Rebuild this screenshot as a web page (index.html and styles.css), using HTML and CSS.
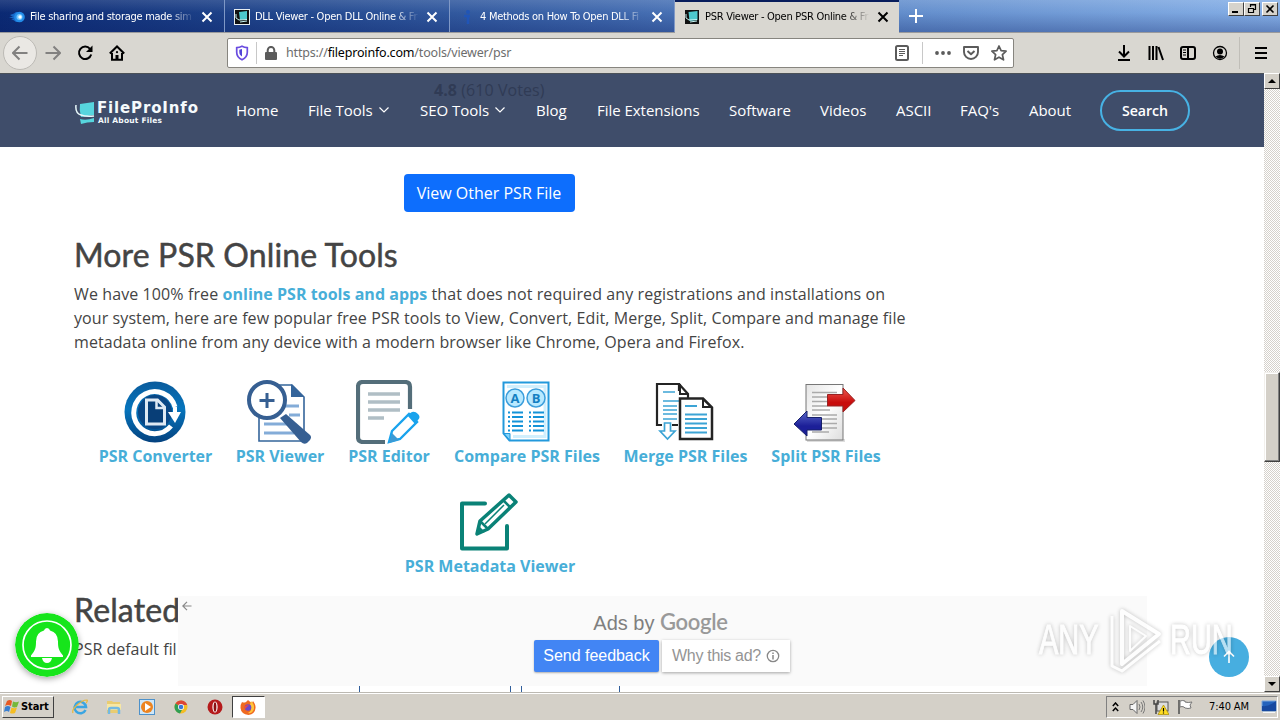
FILE: index.html
```html
<!DOCTYPE html>
<html lang="en">
<head>
<meta charset="utf-8">
<title>PSR Viewer - Open PSR Online</title>
<link rel="stylesheet" href="styles.css">
</head>
<body>
<div class="tabbar">
  <div class="tab">
    <svg class="favicon" viewBox="0 0 16 16"><path d="M1 6Q5 5 7 3h5v10H7Q5 11 2 10h3L0 8h4z" fill="#1769c9"/><circle cx="10.500" cy="8" r="5.300" fill="#238ce8"/><circle cx="10.500" cy="8" r="3" fill="#75c8ff"/><circle cx="11" cy="8" r="1.700" fill="#fff"/></svg>
    <span class="tab-title">File sharing and storage made sim</span>
    <svg class="tab-close" viewBox="0 0 12 12"><path d="M1.500 1.500l9 9M10.500 1.500l-9 9"/></svg>
  </div>
  <div class="tab">
    <svg class="favicon" viewBox="0 0 16 16"><rect x=".5" y=".5" width="15" height="15" fill="#111" stroke="#e8eef0"/><path d="M5 3l8-1v8l-7 1z" fill="#4dc9cd"/><path d="M2 5v4l3 2 8-.5M6 13l7-1" stroke="#c6f4f3" fill="none"/></svg>
    <span class="tab-title">DLL Viewer - Open DLL Online &amp; Fr</span>
    <svg class="tab-close" viewBox="0 0 12 12"><path d="M1.500 1.500l9 9M10.500 1.500l-9 9"/></svg>
  </div>
  <div class="tab">
    <svg class="favicon" viewBox="0 0 16 16"><circle cx="9" cy="3" r="2" fill="#2055b8"/><path d="M5 7h6M9 6v9" stroke="#2055b8" stroke-width="2.500"/></svg>
    <span class="tab-title">4 Methods on How To Open DLL Fi</span>
    <svg class="tab-close" viewBox="0 0 12 12"><path d="M1.500 1.500l9 9M10.500 1.500l-9 9"/></svg>
  </div>
  <div class="tab tab-active">
    <svg class="favicon" viewBox="0 0 16 16"><rect x="1" y="1" width="14" height="14" fill="#111"/><path d="M4.500 3l9-1v9l-8 1z" fill="#4dc9cd"/><path d="M2 5v4l3 2 8-.5M6 13l7-1" stroke="#c6f4f3" fill="none"/></svg>
    <span class="tab-title">PSR Viewer - Open PSR Online &amp; Fr</span>
    <svg class="tab-close" viewBox="0 0 12 12"><path d="M1.500 1.500l9 9M10.500 1.500l-9 9"/></svg>
  </div>
  <svg class="new-tab" viewBox="0 0 14 14"><path d="M7 0v14M0 7h14" stroke="#fff" stroke-width="2"/></svg>
  <div class="win-buttons">
    <span class="win-btn"><svg viewBox="0 0 12 10"><path d="M2 8h6" stroke="#000" stroke-width="2"/></svg></span>
    <span class="win-btn"><svg viewBox="0 0 12 10"><path d="M4.500 3V.5h5v5H8M4 1h6M2.500 4.500h5v4h-5zM2 4.500h6" stroke="#000" fill="none" stroke-width="1.200"/></svg></span>
    <span class="win-btn win-close"><svg viewBox="0 0 12 10"><path d="M2.500 1.500l7 7M9.500 1.500l-7 7" stroke="#000" stroke-width="1.600"/></svg></span>
  </div>
</div>

<div class="toolbar">
  <span class="back"><svg viewBox="0 0 16 16" class="ic grey"><path d="M15.500 8H1M7.500 1.500L1 8l6.500 6.500"/></svg></span>
  <svg viewBox="0 0 16 16" class="ic grey forward"><path d="M.5 8H15M8.500 1.500L15 8l-6.500 6.500"/></svg>
  <svg viewBox="0 0 16 16" class="ic reload"><path d="M13 3.800A6.200 6.200 0 1 0 14.200 9.500"/><path d="M15.500.5V7H9z" fill="#000" stroke="none"/></svg>
  <svg viewBox="0 0 16 16" class="ic home"><path d="M.8 8.500L8 1.500l7.200 7M3 8v6.700h10V8"/><path d="M6.500 15v-5h3v5z" fill="#000" stroke="none"/><circle cx="8" cy="7.200" r="1.100" fill="#000" stroke="none"/></svg>
  <div class="urlbar">
    <svg class="shield" viewBox="0 0 14 16"><path d="M7 1.300c2 1 3.800 1.300 5.300 1.400v4.500c0 3.500-2 6-5.300 7.500-3.300-1.500-5.300-4-5.300-7.500V2.700C3.200 2.600 5 2.300 7 1.300z" fill="none" stroke="#6a4ce0" stroke-width="1.700"/><path d="M7 4v7.500C5 10.200 4.300 8.800 4.300 7V4.800z" fill="#5142d6"/></svg>
    <span class="url-sep"></span>
    <svg class="lock" viewBox="0 0 12 14"><rect y="6" width="12" height="8" rx="1" fill="#5b5b5b"/><path d="M2.700 7V4.200a3.300 3.300 0 0 1 6.600 0V7" stroke="#5b5b5b" stroke-width="2" fill="none"/></svg>
    <span class="url">https://<b>fileproinfo.com</b>/tools/viewer/psr</span>
    <svg class="reader" viewBox="0 0 14 16"><rect x="1" y="1" width="12" height="14" rx="1.500" fill="none" stroke="#5b5b5b" stroke-width="2"/><path d="M4 4.500h6M4 6.500h6M4 8.500h6M4 10.500h4" stroke="#5b5b5b"/></svg>
    <span class="url-sep url-sep-right"></span>
    <svg class="dots" viewBox="0 0 16 4"><g fill="#5b5b5b"><circle cx="2" cy="2" r="1.900"/><circle cx="8" cy="2" r="1.900"/><circle cx="14" cy="2" r="1.900"/></g></svg>
    <svg class="pocket" viewBox="0 0 16 14"><path d="M1 1h14v5a7 7 0 0 1-14 0zM4.500 5L8 8.300 11.500 5" fill="none" stroke="#5b5b5b" stroke-width="1.900" stroke-linejoin="round"/></svg>
    <svg class="star" viewBox="0 0 16 16"><path d="M8 1l2.100 4.700 5 .5-3.700 3.500 1.100 5.100L8 12.200l-4.500 2.600 1.100-5.100L.9 6.200l5-.5z" fill="none" stroke="#5b5b5b" stroke-width="1.700" stroke-linejoin="round"/></svg>
  </div>
  <div class="tool-icons">
    <svg viewBox="0 0 16 16" class="ic"><path d="M8 0v11M3 6.500l5 5 5-5M2 15h12"/></svg>
    <svg viewBox="0 0 16 16" class="ic"><path d="M1.500 1v14M5 1v14M8.500 1v14M10.500 2l4.500 13"/></svg>
    <svg viewBox="0 0 16 16" class="ic"><rect x="1" y="2" width="14" height="12" rx="2"/><path d="M8 2v12"/><path d="M3 5h3M3 7.500h3M3 10h3" stroke-width="1"/></svg>
    <svg viewBox="0 0 16 16" class="ic"><circle cx="8" cy="8" r="6.500" stroke-width="1.300"/><circle cx="8" cy="6.500" r="3" fill="#000" stroke="none"/><path d="M3.500 11.500q4.500-3 9 0Q8 16 3.500 11.500z" fill="#000" stroke="none"/></svg>
    <span class="tool-sep"></span>
    <svg viewBox="0 0 16 16" class="ic"><path d="M2 3h12M2 8h12M2 13h12"/></svg>
  </div>
</div>

<div class="viewport">
  <div class="page">
    <header class="site-nav">
      <div class="votes"><b>4.8</b> (610 Votes)</div>
      <div class="logo">
        <svg class="logo-mark" viewBox="0 0 20 24"><path d="M5 3l14-2v13L6 16Q4 9 5 3z" fill="#57d6de"/><path d="M1 4q-1 8 5 10 5 2 13 1" stroke="#e8f8fa" stroke-width="1.500" fill="none"/><path d="M5 18q6 2 14-1v4q-7 0-13 2z" fill="#57d6de"/></svg>
        <div class="logo-text"><span class="logo-name">FileProInfo</span><span class="logo-sub">All About Files</span></div>
      </div>
      <nav class="menu">
        <a>Home</a>
        <a>File Tools <svg class="chev" viewBox="0 0 10 6"><path d="M.5.5L5 5 9.500.5"/></svg></a>
        <a>SEO Tools <svg class="chev" viewBox="0 0 10 6"><path d="M.5.5L5 5 9.500.5"/></svg></a>
        <a>Blog</a><a>File Extensions</a><a>Software</a><a>Videos</a><a>ASCII</a><a>FAQ's</a><a>About</a>
        <a class="search">Search</a>
      </nav>
    </header>
    <main class="content">
      <a class="view-btn">View Other PSR File</a>
      <h2>More PSR Online Tools</h2>
      <p class="intro">
        <span class="line line-1">We have 100% free <b>online PSR tools and apps</b> that does not required any registrations and installations on</span>
        <span class="line line-2">your system, here are few popular free PSR tools to View, Convert, Edit, Merge, Split, Compare and manage file</span>
        <span class="line line-3">metadata online from any device with a modern browser like Chrome, Opera and Firefox.</span>
      </p>
      <div class="tools">
        <a class="tool"><svg viewBox="0 0 64 64">
          <defs><linearGradient id="cg" x1="0" y1="0" x2="0" y2="1"><stop offset="0" stop-color="#0a5b9c"/><stop offset=".45" stop-color="#0675bd"/><stop offset="1" stop-color="#04427f"/></linearGradient></defs>
          <circle cx="32" cy="32" r="30.500" fill="url(#cg)"/><circle cx="32" cy="32" r="17" fill="#0a4785"/><path d="M48 46A21 21 0 1 1 52 27" fill="none" stroke="#fff" stroke-width="5"/><path d="M45 32h13l-6 11z" fill="#fff"/><path d="M50 27h4v7h-4z" fill="#fff"/><path d="M23.500 20h11l7 7v17h-18z" fill="#083e77" stroke="#dfe9f3" stroke-width="3"/><path d="M33.500 20v8h8" fill="none" stroke="#dfe9f3" stroke-width="2.500"/></svg>PSR Converter</a>
        <a class="tool"><svg viewBox="0 0 64 64">
          <path d="M12 5h33l12 12v44H12z" fill="#fff" stroke="#35659b" stroke-width="1.600"/><path d="M44 4v13h13z" fill="#35659b"/><path d="M37 26h15M42 35h11M17 44h26M17 53h30" stroke="#83acd8" stroke-width="3"/>
          <path d="M33 38l6-4 24 21q2 2 0 5l-3 3q-3 2-6-1z" fill="#365f92"/><circle cx="20" cy="20" r="18" fill="#fff" stroke="#365f92" stroke-width="4"/><path d="M12.500 20.500h15M20 13v15" stroke="#365f92" stroke-width="3"/></svg>PSR Viewer</a>
        <a class="tool"><svg viewBox="0 0 64 64">
          <path d="M54 29V7q0-5-5-5H7Q2 2 2 7v50q0 5 5 5h22" fill="none" stroke="#546e7a" stroke-width="4.200"/><path d="M12 14h32M12 22h32M12 30h32M12 38h16" stroke="#b0bec5" stroke-width="3.600"/>
          <path d="M33 62l3-11 17-17 8 8-17 17z" fill="#fff" stroke="#19a3ed" stroke-width="2.400"/><path d="M33 63l3-10 7 7z" fill="#3c9bd5"/><path d="M51 35l5-3q3-1 6 2t0 6l-3 4z" fill="#19a3ed"/></svg>PSR Editor</a>
        <a class="tool"><svg viewBox="0 0 64 64">
          <path d="M9.500 2.500h45v58h-39l-6-7z" fill="#fff" stroke="#2399dc" stroke-width="2"/><path d="M13 6.500h38v50H19" fill="none" stroke="#d1effd" stroke-width="3"/><path d="M10 53.500h6v7z" fill="#82d4fb" stroke="#2399dc"/><circle cx="21" cy="18" r="9" fill="#b9e9ff" stroke="#3d9fdc" stroke-width="1.500"/><circle cx="42" cy="18" r="9" fill="#b9e9ff" stroke="#3d9fdc" stroke-width="1.500"/>
          <text x="21" y="22.500" class="badge-letter">A</text><text x="42" y="22.500" class="badge-letter">B</text><path d="M18 32.500h11M18 37h11M18 41.500h11M18 46h11M18 50.500h11M39 32.500h11M39 37h11M39 41.500h11M39 46h11M39 50.500h11" stroke="#1593d8" stroke-width="2"/><path d="M14 32.500h2M14 37h2M14 41.500h2M14 46h2M14 50.500h2M35 32.500h2M35 37h2M35 41.500h2M35 46h2M35 50.500h2" stroke="#1593d8" stroke-width="2"/></svg>Compare PSR Files</a>
        <a class="tool"><svg viewBox="0 0 64 64">
          <path d="M26 11V4H4v41h5M19 45h6M26 4l9 10v4" fill="none" stroke="#242424" stroke-width="2.200"/><path d="M27 4v10h8" fill="none" stroke="#242424" stroke-width="2"/><path d="M10 12h12M10 21h16M10 26h14M10 30h14M10 34h14M10 39h14" stroke="#3ca4d5" stroke-width="1.700"/><path d="M27 18.500h23l9 9V59H27z" fill="#fff" stroke="#242424" stroke-width="2.500"/><path d="M50 18v9h9" fill="none" stroke="#242424" stroke-width="2"/><path d="M32 26h12M32 34.500h22M32 39h22M32 43.500h22M32 48h22M32 52.500h22" stroke="#3ca4d5" stroke-width="1.800"/><path d="M11.500 43h6v8H22l-7.500 8L7 51h4.500z" fill="#fff" stroke="#3ca4d5" stroke-width="1.700"/></svg>Merge PSR Files</a>
        <a class="tool"><svg viewBox="0 0 64 64">
          <defs><linearGradient id="pg" x1="0" y1="0" x2="1" y2="1"><stop stop-color="#e5e5e5"/><stop offset=".5" stop-color="#fff"/><stop offset="1" stop-color="#ddd"/></linearGradient><linearGradient id="rg" x1="0" y1="0" x2="0" y2="1"><stop stop-color="#ee5a50"/><stop offset=".6" stop-color="#c80c0c"/></linearGradient><linearGradient id="bg" x1="0" y1="0" x2="0" y2="1"><stop stop-color="#5a68c8"/><stop offset=".6" stop-color="#1c1f98"/></linearGradient></defs>
          <rect x="14" y="59" width="38" height="3" fill="#ddd"/><rect x="13" y="4.500" width="37" height="55.500" fill="url(#pg)" stroke="#777"/><path d="M19 12.500h25M19 17h25M19 21.500h25M19 26h16M19 30h18M19 35h25M19 39h25M19 43.500h25M19 48h25M19 52h17" stroke="#aaa" stroke-width="1.500"/><path d="M34.500 14.500H50V8l12 12.500L50 32v-6H34.500z" fill="url(#rg)" stroke="#922"/><path d="M28.500 37.500H14V31L1 44l13 12v-6h14.500z" fill="url(#bg)" stroke="#17206a"/></svg>Split PSR Files</a>
      </div>
      <a class="tool tool-meta"><svg viewBox="0 0 64 64"><path d="M27 13.500H4v45h45V36" fill="none" stroke="#0a8277" stroke-width="4" stroke-linecap="round" stroke-linejoin="round"/><path d="M19 44l3-13L51 5l7 7-28 27z" fill="#fff" stroke="#0a8277" stroke-width="3.500" stroke-linejoin="round"/><path d="M45 10l7 7M22 31l8 8" stroke="#0a8277" stroke-width="2.500"/><path d="M27 34L46 15" stroke="#0a8277" stroke-width="1.500"/><path d="M19 44l2-8 6 6z" fill="#0a8277"/></svg>PSR Metadata Viewer</a>
      <h2 class="related">Related</h2>
      <p class="default-file">PSR default fil</p>
    </main>
    <div class="table-peek"><i></i><i></i><i></i><i></i></div>
    <div class="ad">
      <svg class="ad-back" viewBox="0 0 10 10"><path d="M9.500 5H1M5 .8L.8 5 5 9.200" fill="none" stroke="#888" stroke-width="1.200"/></svg>
      <div class="ad-title">Ads by <b>Google</b></div>
      <div class="ad-actions"><span class="feedback">Send feedback</span><span class="why">Why this ad? <svg viewBox="0 0 14 14"><circle cx="7" cy="7" r="5.700" fill="none" stroke="#888" stroke-width="1.300"/><path d="M7 6v4.500M7 3.500v1.500" stroke="#888" stroke-width="1.500"/></svg></span></div>
    </div>
    <svg class="bell" viewBox="0 0 64 64"><circle cx="32" cy="32" r="32" fill="#16e51b"/><circle cx="32" cy="32" r="24" fill="none" stroke="#fff" stroke-width="1.700"/><path d="M32 15q2.500 0 3 2.500 8 2 8 11c0 7 1 9 5 14v1.500H16v-1.500c4-5 5-7 5-14q0-9 8-11 .5-2.500 3-2.500z" fill="#fff"/><path d="M27 45h10q-1 5-5 5t-5-5z" fill="#fff"/></svg>
    <div class="to-top"><svg viewBox="0 0 14 14"><path d="M7 13V1.500M2 6.500l5-5 5 5" fill="none" stroke="#fff" stroke-width="1.600"/></svg></div>
    <div class="watermark"><span>ANY</span><svg viewBox="0 0 54 66"><g fill="none" stroke="#fff" stroke-linejoin="round"><path d="M13 4L50 27 13 57z" stroke-width="4"/><path d="M3 9v50l10 5 38-30" stroke-width="3"/><path d="M21 19v25l16-15z" stroke-width="2"/></g></svg><span>RUN</span></div>
  </div>
  <div class="scrollbar">
    <span class="sb-btn"><svg viewBox="0 0 8 4"><path d="M0 4l4-4 4 4z"/></svg></span>
    <span class="sb-thumb"></span>
    <span class="sb-btn"><svg viewBox="0 0 8 4"><path d="M0 0l4 4 4-4z"/></svg></span>
  </div>
</div>

<div class="taskbar">
  <div class="start"><svg viewBox="0 0 16 16"><path d="M3 2q3-2 5 0L7 7Q4 5 1 7z" fill="#e85a24"/><path d="M9 2.500q3 1.500 6 0L13 8Q10 9 8 7.500z" fill="#75b83a"/><path d="M1 8q3-2 5.500 0L5 13Q3 11 0 13z" fill="#3a7fd0"/><path d="M7.500 8.500q3 1.500 5.500 0L11 14q-3 1-5 0z" fill="#f5bd22"/></svg>Start</div>
  <div class="launch">
    <span><svg viewBox="0 0 16 16"><path d="M13.500 11A5.700 5.700 0 1 1 14 8H4" fill="none" stroke="#3aa5e2" stroke-width="2.500"/><path d="M1 14C-1 10 9 1 15 1q1 1-1 3" fill="none" stroke="#e8b83c" stroke-width="1.200"/></svg></span>
    <span><svg viewBox="0 0 16 16"><path d="M1 2h5l1 1h7v11H1z" fill="#e9cc70"/><path d="M1 5h14v6H1z" fill="#f7e7a3"/><path d="M3 15v-4q0-2 2-2h6q2 0 2 2v4" fill="none" stroke="#73b9e2" stroke-width="2.500"/></svg></span>
    <span><svg viewBox="0 0 16 16"><rect x=".5" y=".5" width="15" height="15" fill="#cfe7f8" stroke="#4d91ca"/><circle cx="8" cy="8" r="6" fill="#ed8420"/><path d="M6 4l6 4-6 4z" fill="#fff"/></svg></span>
    <span><svg viewBox="0 0 16 16"><circle cx="8" cy="8" r="6.500" fill="#f4bd24"/><path d="M8 8L2.500 4.500A6.500 6.500 0 0 1 14.200 6H8z" fill="#dc4637"/><path d="M8 8L2.500 4.500A6.500 6.500 0 0 0 7 14.400L10 9z" fill="#2f9e54"/><circle cx="8" cy="8" r="3" fill="#fff"/><circle cx="8" cy="8" r="2.300" fill="#3b78d8"/></svg></span>
    <span><svg viewBox="0 0 16 16"><ellipse cx="8" cy="8" rx="7.500" ry="7.500" fill="#b51a1b"/><ellipse cx="8" cy="8" rx="2.600" ry="5.500" fill="#fff"/><ellipse cx="8" cy="8" rx="1.400" ry="4.800" fill="#8c1011"/></svg></span>
    <span class="pressed"><svg viewBox="0 0 16 16"><path d="M2 3q2 1 4 0l2-2q2 2 4 3l1-2q3 4 2.500 7-.5 6-7 7Q1 15 .5 9 .5 5 2 3z" fill="#f06a20"/><path d="M11 2q5 5 2 10-2 3-5 2 5-3 2-8z" fill="#ffc43a"/><circle cx="8" cy="8.500" r="3.300" fill="#6b48c9"/><path d="M4 8q3-3 5-1-3 0-3 3z" fill="#f64a38"/></svg></span>
  </div>
  <div class="tray">
    <svg class="t-chev" viewBox="0 0 7 10"><path d="M.8 4l2.700-3 2.700 3M.8 9l2.700-3 2.700 3" fill="none" stroke="#000" stroke-width="1.500"/></svg>
    <svg class="t-vol" viewBox="0 0 16 16"><path d="M1 5.500h3l4-4v13l-4-4H1z" fill="#f5f5f5" stroke="#666"/><path d="M10 5q2 3 0 6M12 3q3.500 5 0 10M14 1.500q4 6.500 0 13" fill="none" stroke="#777"/></svg>
    <svg class="t-net" viewBox="0 0 16 16"><rect x="4" y="3" width="11" height="9" fill="#ddd" stroke="#555"/><path d="M1 1v4h4V1M3 5v10" fill="none" stroke="#444" stroke-width="1.500"/><path d="M10.500 6l5.500 9.500H5z" fill="#ffdd22" stroke="#a78b00" stroke-width=".7"/><path d="M10.500 9v3.500M10.500 13.500v1" stroke="#000" stroke-width="1.200"/></svg>
    <svg class="t-flag" viewBox="0 0 16 16"><path d="M2 1v14" stroke="#555" stroke-width="1.600"/><path d="M3 2q3-1 5 0v1q3 1 7 0l-2 3 1 3q-3 1-6 0l-1-1q-2-1-4 0z" fill="#fff" stroke="#777"/></svg>
    <span class="clock">7:40 AM</span>
    <svg class="t-desk" viewBox="0 0 16 14"><path d="M1 1h14v10H1z" fill="#2463bd" stroke="#7aa7dc"/><path d="M1 6q7 1 14-5v10H1z" fill="#1749a0"/><path d="M2 12.500h12" stroke="#f6f6f6"/></svg>
  </div>
</div>
</body>
</html>
```
FILE: styles.css
```css
* { box-sizing: border-box; }
body { margin: 0; width: 1280px; height: 720px; overflow: hidden; display: flex; flex-direction: column; font-family: "Open Sans", sans-serif; background: #fff; }
svg { display: block; flex: none; }

/* tab strip */
.tabbar { height: 33px; flex: none; display: flex; align-items: stretch; background: linear-gradient(180deg, rgba(255,255,255,.12), rgba(0,20,90,.02) 40%, rgba(10,30,100,.32)), linear-gradient(90deg, #0b2a74 0, #244a90 300px, #4069ae 600px, #6590ce 900px, #87b1e8 1280px); border-bottom: 1px solid #9a9a9c; }
.tab { width: 225px; padding: 1px 11px 0 9px; display: flex; align-items: center; border-right: 1px solid #7f98c6; color: #fff; }
.favicon { width: 16px; height: 16px; }
.tab-title { width: 167px; margin-left: 5px; white-space: nowrap; font: 11px/16px "DejaVu Sans Condensed", sans-serif; letter-spacing: -.28px; -webkit-mask-image: linear-gradient(90deg, #000 138px, transparent 165px); mask-image: linear-gradient(90deg, #000 138px, transparent 165px); }
.tab-close { width: 12px; height: 12px; margin-left: 5px; fill: none; stroke: #fff; stroke-width: 2; }
.tab-active { width: 224px; height: 33px; background: #d9d7d1; border-top: 2px solid #071d5c; border-right: 0; color: #000; padding: 0 10px 1px 9px; }
.tab-active .tab-close { stroke: #000; }
.new-tab { width: 14px; height: 14px; margin: 9px 0 0 10px; }
.win-buttons { margin: 2px 2px 0 auto; display: flex; }
.win-btn { width: 16px; height: 14px; padding: 1px; background: #d6d3cc; border: 1px solid; border-color: #fff #404040 #404040 #fff; }
.win-btn svg { width: 12px; height: 10px; }
.win-close { margin-left: 2px; }

/* navigation toolbar */
.toolbar { height: 40px; flex: none; display: flex; align-items: center; background: #d9d7d1; padding-left: 3px; }
.ic { width: 16px; height: 16px; fill: none; stroke: #000; stroke-width: 2; }
.grey { stroke: #828180; }
.back { width: 34px; height: 34px; border-radius: 50%; border: 1px solid #bcbab5; background: #eae8e4; display: flex; align-items: center; justify-content: center; }
.forward { margin-left: 8px; }
.reload { margin-left: 16px; }
.home { margin-left: 16px; }
.urlbar { width: 787px; height: 30px; margin-left: 102px; background: #fff; border: 1px solid #87857f; border-radius: 2px; display: flex; align-items: center; padding-left: 7px; }
.shield { width: 14px; height: 16px; }
.url-sep { width: 1px; height: 22px; background: #c8c8c8; margin-left: 7px; }
.lock { width: 12px; height: 14px; margin-left: 8px; }
.url { width: 609px; margin-left: 9px; font: 12.500px/18px "Noto Sans", sans-serif; color: #6d6d6d; white-space: nowrap; letter-spacing: -.18px; }
.url b { font-weight: 400; color: #000; }
.reader { width: 14px; height: 16px; }
.url-sep-right { margin-left: 13px; }
.dots { width: 16px; height: 4px; margin-left: 12px; }
.pocket { width: 16px; height: 14px; margin-left: 12px; }
.star { width: 16px; height: 16px; margin-left: 12px; }
.tool-icons { margin-left: 102px; display: flex; align-items: center; gap: 16px; }
.tool-sep { width: 1px; height: 32px; background: #c0beb8; margin: 0 -4px 0 -5px; }
.tool-icons .ic:last-child { margin-left: 1px; }

/* page */
.viewport { height: 619px; flex: none; display: flex; }
.page { width: 1264px; position: relative; overflow: hidden; color: #444; }
.site-nav { height: 74px; background: #3f4d6a; border-top: 1px solid #4b5158; display: flex; align-items: center; padding-left: 75px; position: relative; }
.votes { position: absolute; left: 434px; top: 4px; font-size: 16px; line-height: 24px; color: #303b55; white-space: nowrap; letter-spacing: .07px; }
.logo { width: 161px; display: flex; align-items: center; gap: 2px; padding-top: 4px; }
.logo-mark { width: 20px; height: 24px; }
.logo-text { display: flex; flex-direction: column; color: #f5fafc; font-family: "DejaVu Sans", sans-serif; white-space: nowrap; }
.logo-name { font-size: 15px; line-height: 15px; font-weight: 700; letter-spacing: .85px; }
.logo-sub { font-size: 7.500px; line-height: 9px; font-weight: 700; letter-spacing: .2px; margin-left: 1px; }
.menu { display: grid; grid-template-columns: 72px 112px 116px 61px 132px 91px 76px 64px 69px 71px 90px; align-items: center; color: #fff; font-size: 15px; line-height: 20px; }
.menu a { display: flex; align-items: center; white-space: nowrap; gap: 6px; padding-bottom: 2px; letter-spacing: -.03px; }
.chev { width: 10px; height: 6px; fill: none; stroke: #fff; stroke-width: 1.200; }
.menu .search { height: 41px; padding: 0; justify-content: center; border: 2px solid #47b2e4; border-radius: 21px; font-weight: 600; font-size: 14.200px; }
.content { width: 832px; margin-left: 74px; padding-top: 27px; display: flex; flex-direction: column; }
.view-btn { align-self: center; width: 171px; height: 38px; margin-right: 2px; border-radius: 4px; background: #0d6efd; color: #fff; font-size: 16px; line-height: 38px; text-align: center; white-space: nowrap; }
h2 { margin: 24px 0 0; font: 400 32px/38px Lato, sans-serif; letter-spacing: .12px; -webkit-text-stroke: .5px #444; white-space: nowrap; }
.intro { margin: 8px 0 0; font-size: 16px; line-height: 24px; }
.line { display: block; white-space: nowrap; }
.line-1 { letter-spacing: .105px; }
.line-2 { letter-spacing: .085px; }
.line-3 { letter-spacing: .07px; }
.intro b { color: #47aed8; letter-spacing: .03px; }
.tools { margin: 26px 0 0 25px; display: grid; grid-template-columns: 113px 88px 82px 146px 123px 110px; column-gap: 24px; }
.tool { display: flex; flex-direction: column; align-items: center; font-size: 16px; line-height: 24px; font-weight: 700; color: #47aed8; white-space: nowrap; }
.tool svg { width: 64px; height: 64px; margin-right: 2px; }
.tool-meta { margin-top: 22px; }
.tool-meta svg { margin-right: 0; }
.badge-letter { font: 700 13px "Open Sans", sans-serif; fill: #147fc2; text-anchor: middle; }
.related { margin-top: 13px; }
.default-file { margin: 8px 0 0; font-size: 16px; line-height: 24px; }

/* overlays */
.table-peek { position: absolute; left: 359px; top: 613px; width: 261px; height: 6px; display: grid; grid-template-columns: 151px 11px 98px 1px; }
.table-peek i { width: 1px; background: #315f9c; }
.ad { position: absolute; left: 178px; top: 523px; width: 969px; height: 90px; background: #fafafa; }
.ad-back { position: absolute; left: 4px; top: 5px; width: 10px; height: 10px; }
.ad-title { margin-top: 14px; padding-right: 4px; text-align: center; font: 20px/24px "Liberation Sans", sans-serif; color: #7f7f7f; }
.ad-title b { font: 600 22px/24px "Lato", sans-serif; color: #999; letter-spacing: -.3px; }
.ad-actions { display: flex; margin: 5px 0 0 356px; gap: 3px; font: 16px/32px "Liberation Sans", sans-serif; white-space: nowrap; }
.feedback { width: 125px; height: 32px; background: #4285f4; color: #fff; border-radius: 2px; text-align: center; letter-spacing: -.03px; box-shadow: 0 1px 2px rgba(0,0,0,.3); }
.why { width: 128px; height: 32px; background: #fff; color: #949494; padding-left: 10px; display: flex; align-items: center; gap: 5px; letter-spacing: -.3px; box-shadow: 0 1px 3px rgba(0,0,0,.35); }
.why svg { width: 14px; height: 14px; }
.bell { position: absolute; left: 15px; top: 540px; width: 64px; height: 64px; border-radius: 50%; box-shadow: 0 2px 6px rgba(0,0,0,.35); }
.to-top { position: absolute; left: 1209px; top: 564px; width: 40px; height: 40px; border-radius: 50%; background: #47aee0; display: flex; align-items: center; justify-content: center; }
.to-top svg { width: 14px; height: 14px; }
.watermark { position: absolute; left: 1039px; top: 534px; width: 196px; height: 66px; display: flex; align-items: center; font: 400 42px/66px "Liberation Sans", sans-serif; color: #fff; opacity: .62; filter: drop-shadow(0 0 2px rgba(0,0,0,.38)); }
.watermark span { display: block; width: 64px; -webkit-text-stroke: 1px #fff; transform: scaleX(.69); transform-origin: left; }
.watermark svg { width: 54px; height: 66px; margin: 0 7px 0 6px; }

/* scrollbar */
.scrollbar { width: 16px; display: flex; flex-direction: column; justify-content: space-between; background: repeating-conic-gradient(#d5d1cb 0 25%, #fff 0 50%) 0 0 / 2px 2px; position: relative; }
.sb-btn { height: 16px; background: #d4d0c8; border: 1px solid; border-color: #fff #404040 #404040 #fff; display: flex; align-items: center; justify-content: center; }
.sb-btn svg { width: 8px; height: 4px; }
.sb-thumb { position: absolute; top: 299px; left: 0; width: 16px; height: 90px; background: #d4d0c8; border: 1px solid; border-color: #f2f0ec #404040 #404040 #f2f0ec; box-shadow: inset -1px -1px #808080, inset 1px 1px #fff; }

/* taskbar */
.taskbar { height: 28px; flex: none; display: flex; align-items: flex-start; background: #d4d0c8; border-top: 1px solid #bcb9b2; box-shadow: inset 0 1px #fff; padding: 3px 2px 0; }
.start { width: 52px; height: 22px; padding-left: 1px; display: flex; align-items: center; gap: 1px; border: 1px solid; border-color: #fff #404040 #404040 #fff; font: 700 11px/18px "DejaVu Sans Condensed", sans-serif; color: #000; letter-spacing: -.1px; }
.start svg { width: 16px; height: 16px; }
.launch { display: flex; margin-left: 9px; }
.launch span { width: 33.800px; height: 22px; display: flex; align-items: center; justify-content: center; }
.launch svg { width: 16px; height: 16px; }
.launch .pressed { width: 33px; background: #fff; border: 1px solid; border-color: #404040 #fff #fff #404040; }
.tray { width: 172px; height: 22px; margin-left: auto; border: 1px solid; border-color: #808080 #fff #fff #808080; display: flex; align-items: center; }
.t-chev { width: 7px; height: 10px; margin-left: 5px; }
.t-vol { width: 16px; height: 16px; margin-left: 10px; }
.t-net { width: 16px; height: 16px; margin-left: 8px; }
.t-flag { width: 16px; height: 16px; margin-left: 8px; }
.clock { width: 42px; margin-left: 16px; font: 11px/16px "DejaVu Sans Condensed", sans-serif; color: #000; white-space: nowrap; letter-spacing: -.1px; }
.t-desk { width: 16px; height: 14px; margin-left: 10px; }
```
